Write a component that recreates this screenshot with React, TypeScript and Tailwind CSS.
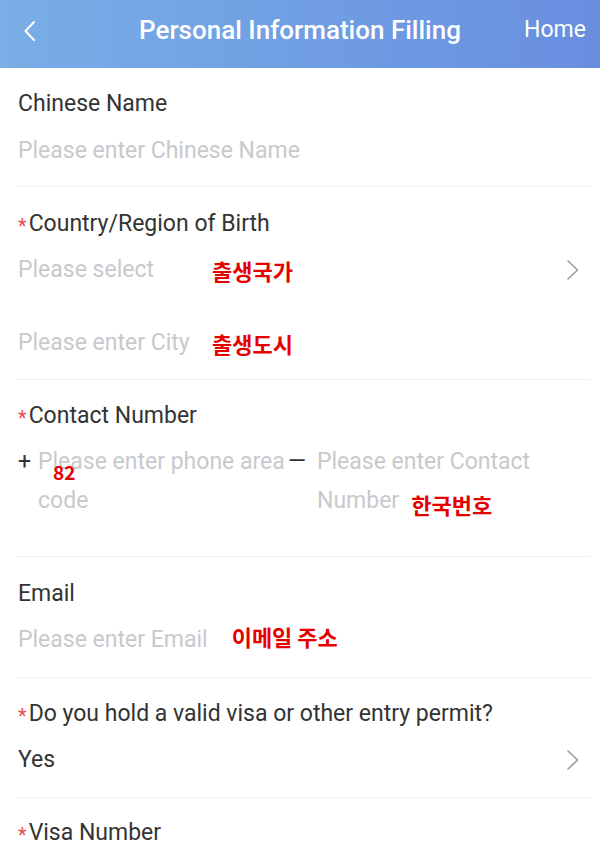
import React from 'react';

const ui = { fontFamily: 'Roboto, "Noto Sans", "Noto Sans CJK KR", sans-serif' };
const kr = { fontFamily: '"Noto Sans CJK KR", "Noto Sans", sans-serif' };

function Chevron() {
  return (
    <svg width="14" height="22" viewBox="0 0 14 22" fill="none" className="shrink-0">
      <path d="M2 2l9.5 9L2 20" stroke="#9a9a9a" strokeWidth="1.6" strokeLinecap="round" strokeLinejoin="round" />
    </svg>
  );
}

function Label({ text, required }: { text: string; required?: boolean }) {
  return (
    <div className="flex items-center h-[28px] text-[23px] text-[#333333]">
      {required && <span className="text-[#e05050] text-[20px] mr-[2px] self-start mt-[1px]">*</span>}
      <span>{text}</span>
    </div>
  );
}

function Note({ children, className = '' }: { children: React.ReactNode; className?: string }) {
  return (
    <span style={kr} className={`text-[#e60000] font-bold text-[22px] leading-none ${className}`}>
      {children}
    </span>
  );
}

export default function App() {
  return (
    <div style={ui} className="w-[600px] h-[853px] overflow-hidden bg-white">
      <header className="h-[68px] grid grid-cols-[1fr_auto_1fr] items-center pb-[7px] px-[14px] bg-gradient-to-r from-[#79aee6] to-[#688ee0] text-white">
        <svg width="24" height="24" viewBox="0 0 24 24" fill="none" className="ml-[4px]">
          <path d="M16 3l-8.5 9L16 21" stroke="white" strokeWidth="2" strokeLinecap="round" strokeLinejoin="round" />
        </svg>
        <h1 className="text-[26px] font-medium">Personal Information Filling</h1>
        <span className="text-[23px] justify-self-end">Home</span>
      </header>

      <div className="ml-[16px] mr-[10px]">
        <section className="pl-[2px] pt-[22px] pb-[21px] border-b border-[#f0f0f0]">
          <Label text="Chinese Name" />
          <div className="mt-[19px] h-[28px] flex items-center text-[23px] text-[#c8c9cc]">Please enter Chinese Name</div>
        </section>

        <section className="pl-[2px] pt-[23px] pb-[22px] border-b border-[#f0f0f0]">
          <Label text="Country/Region of Birth" required />
          <div className="mt-[18px] h-[28px] flex items-center text-[23px] text-[#c8c9cc]">
            <span className="w-[194px]">Please select</span>
            <Note>출생국가</Note>
            <span className="flex-1" />
            <span className="mr-[10px]"><Chevron /></span>
          </div>
          <div className="mt-[45px] h-[28px] flex items-center text-[23px] text-[#c8c9cc]">
            <span className="w-[194px]">Please enter City</span>
            <Note>출생도시</Note>
          </div>
        </section>

        <section className="pl-[2px] pt-[22px] pb-[36px] border-b border-[#f0f0f0]">
          <Label text="Contact Number" required />
          <div className="mt-[12px] flex items-start text-[23px] leading-[39px]">
            <span className="text-[#333333] w-[20px]">+</span>
            <div className="relative w-[250px] text-[#c8c9cc]">
              Please enter phone area code
              <span style={kr} className="absolute left-[15px] top-[20px] text-[#e60000] font-bold text-[19px] leading-none">82</span>
            </div>
            <span className="text-[#333333] w-[29px]">—</span>
            <div className="w-[240px] text-[#c8c9cc]">
              Please enter Contact Number
              <Note className="ml-[12px] relative top-[6px]">한국번호</Note>
            </div>
          </div>
        </section>

        <section className="pl-[2px] pt-[23px] pb-[23px] border-b border-[#f0f0f0]">
          <Label text="Email" />
          <div className="mt-[18px] h-[28px] flex items-center text-[23px] text-[#c8c9cc]">
            <span>Please enter Email</span>
            <Note className="ml-[24px] -mt-[8px]">이메일 주소</Note>
          </div>
        </section>

        <section className="pl-[2px] pt-[22px] pb-[23px] border-b border-[#f0f0f0]">
          <Label text="Do you hold a valid visa or other entry permit?" required />
          <div className="mt-[18px] h-[28px] flex items-center justify-between text-[23px] text-[#333333]">
            <span>Yes</span>
            <span className="mr-[10px]"><Chevron /></span>
          </div>
        </section>

        <section className="pl-[2px] pt-[21px]">
          <Label text="Visa Number" required />
        </section>
      </div>
    </div>
  );
}
